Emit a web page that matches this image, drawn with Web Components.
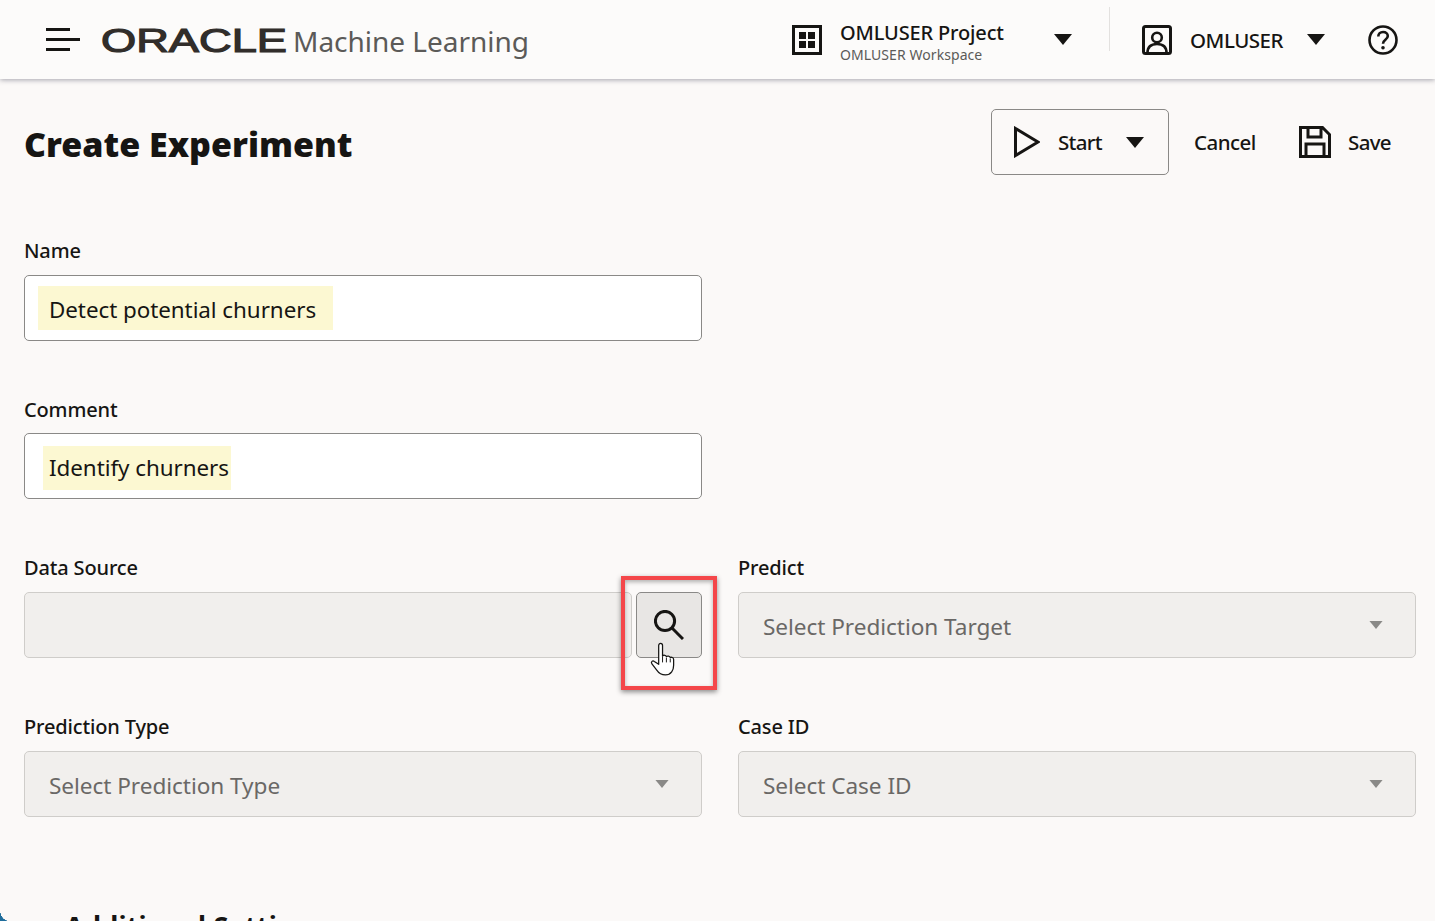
<!DOCTYPE html>
<html lang="en">
<head>
<meta charset="utf-8">
<title>Create Experiment</title>
<style>
  html, body { margin: 0; height: 921px; overflow: hidden; background: #fbf9f8; }
  body { font-family: "Noto Sans", "Open Sans", sans-serif; color: #161513; }
</style>
</head>
<body>
<oml-header></oml-header>
<oml-page>
  <oml-title-bar slot="top"></oml-title-bar>
  <oml-field label="Name"><oml-input value="Detect potential churners" mark-left="11" mark-right="17" text-line="47"></oml-input></oml-field>
  <div></div>
  <oml-field label="Comment" style="--label-nudge:1px"><oml-input value="Identify churners" mark-left="6" mark-right="2" mark-drop="4" text-line="44"></oml-input></oml-field>
  <div></div>
  <oml-field label="Data Source"><oml-source-picker></oml-source-picker></oml-field>
  <oml-field label="Predict"><oml-select placeholder="Select Prediction Target"></oml-select></oml-field>
  <oml-field label="Prediction Type"><oml-select placeholder="Select Prediction Type"></oml-select></oml-field>
  <oml-field label="Case ID"><oml-select placeholder="Select Case ID"></oml-select></oml-field>
</oml-page>
<script>
// caret used in header and buttons
const caret = (w, h, color) => `<svg width="${w}" height="${h}" viewBox="0 0 18 11" style="display:block;flex:none"><path d="M0 0h18L9 11z" fill="${color}"/></svg>`;

class OmlHeader extends HTMLElement {
  constructor() {
    super();
    this.attachShadow({ mode: "open" });
    this.shadowRoot.innerHTML = `
    <style>
      :host { display: flex; align-items: center; height: 79px; background: #fcfbfa; box-shadow: 0 1px 5px rgba(60,60,80,.45); position: relative; z-index: 2; padding-left: 46px; box-sizing: border-box; }
      svg { display: block; flex: none; }
      .logo { margin-left: 21px; margin-top: 3px; overflow: visible; }
      .product { margin-left: 5px; font-size: 28px; color: #5b5a58; letter-spacing: -.02px; white-space: nowrap; line-height: 40px; margin-top: 3px; }
      .right { margin-left: auto; display: flex; align-items: center; height: 100%; }
      .project { margin-left: 18px; width: 214px; margin-top: 5px; }
      .project b { display: block; font-weight: 500; font-size: 20px; line-height: 26px; letter-spacing: -.15px; white-space: nowrap; }
      .project span { display: block; font-size: 14px; line-height: 18px; color: #5b5a58; white-space: nowrap; letter-spacing: .07px; }
      .sep { width: 1px; height: 44px; background: #e3e1df; margin: -21px 32px 0 37px; }
      .user { margin-left: 18px; font-size: 20.5px; font-weight: 500; letter-spacing: -.5px; width: 117px; margin-top: 1px; }
    </style>
    <svg width="34" height="24" viewBox="0 0 34 24"><path d="M0 1.5h24M0 11.5h34M0 21.5h24" stroke="#161513" stroke-width="3"/></svg>
    <svg class="logo" width="187" height="32" viewBox="0 0 187 32"><text x="0" y="27" font-family="Liberation Sans" font-size="33.5" fill="#312d2a" stroke="#312d2a" stroke-width="1.2" textLength="186" lengthAdjust="spacingAndGlyphs">ORACLE</text></svg>
    <span class="product">Machine Learning</span>
    <div class="right">
      <svg width="30" height="30" viewBox="0 0 30 30"><path d="M0 0h30v30H0zM3 3v24h24V3zM7 7h7v7H7zM16 7h7v7h-7zM7 16h7v7H7zM16 16h7v7h-7z" fill="#161513" fill-rule="evenodd"/></svg>
      <div class="project"><b>OMLUSER Project</b><span>OMLUSER Workspace</span></div>
      ${caret(18, 11, "#161513")}
      <div class="sep"></div>
      <svg width="30" height="30" viewBox="0 0 30 30"><rect x="1.500" y="1.500" width="27" height="27" rx="2" fill="none" stroke="#161513" stroke-width="3"/><circle cx="15" cy="12.500" r="4.800" fill="none" stroke="#161513" stroke-width="2.600"/><path d="M5.500 28c0-6 3.500-9 9.500-9s9.500 3 9.500 9" fill="none" stroke="#161513" stroke-width="2.600"/></svg>
      <span class="user">OMLUSER</span>
      ${caret(18, 11, "#161513")}
      <svg style="margin:0 37px 0 43px" width="30" height="30" viewBox="0 0 30 30"><circle cx="15" cy="15" r="13.500" fill="none" stroke="#161513" stroke-width="2.600"/><path d="M10.300 11.600c0-2.800 2-4.600 4.800-4.600s4.700 1.700 4.700 4.100c0 3.800-4.800 3.700-4.800 7.600" fill="none" stroke="#161513" stroke-width="2.600"/><circle cx="15" cy="22.800" r="1.800" fill="#161513"/></svg>
    </div>`;
  }
}
customElements.define("oml-header", OmlHeader);

class OmlPage extends HTMLElement {
  constructor() {
    super();
    this.attachShadow({ mode: "open" });
    this.shadowRoot.innerHTML = `
    <style>
      :host { display: block; padding: 30px 19px 0 24px; position: relative; }
      .grid { display: grid; grid-template-columns: 678px 678px; column-gap: 36px; row-gap: 56.67px; margin-top: 63.6px; }
      h2 { margin: 91px 0 0 41px; font-size: 27px; font-weight: 700; line-height: 36px; letter-spacing: .2px; }
      .corner { position: fixed; left: 0; bottom: 0; width: 9px; height: 11px; background: radial-gradient(ellipse 9px 11px at 100% 0, transparent 98%, #1f6d9c 100%); }
    </style>
    <slot name="top"></slot>
    <div class="grid"><slot></slot></div>
    <h2>Additional Settings</h2>
    <div class="corner"></div>`;
  }
}
customElements.define("oml-page", OmlPage);

class OmlTitleBar extends HTMLElement {
  constructor() {
    super();
    this.attachShadow({ mode: "open" });
    this.shadowRoot.innerHTML = `
    <style>
      :host { display: flex; align-items: center; height: 66px; }
      h1 { margin: 0; font-size: 34px; font-weight: 900; line-height: 44px; letter-spacing: 0; white-space: nowrap; margin-top: 3px; }
      .actions { margin-left: auto; display: flex; align-items: center; font-size: 20.5px; font-weight: 500; letter-spacing: -.4px; }
      .start { display: flex; align-items: center; box-sizing: border-box; width: 178px; height: 66px; border: 1px solid #8a8987; border-radius: 5px; padding-left: 22px; }
      .start svg:first-child { margin-right: 18px; }
      .start span { width: 68px; letter-spacing: -.7px; }
      .cancel { margin-left: 25px; width: 105px; letter-spacing: -.55px; }
      .save { margin-right: 25px; display: flex; align-items: center; gap: 17px; letter-spacing: -.65px; }
    </style>
    <h1>Create Experiment</h1>
    <div class="actions">
      <div class="start">
        <svg width="26" height="32" viewBox="0 0 26 32"><path d="M1.500 2.500v27L24 16z" fill="none" stroke="#161513" stroke-width="3"/></svg>
        <span>Start</span>
        ${caret(18, 11, "#161513")}
      </div>
      <span class="cancel">Cancel</span>
      <span class="save">
        <svg style="display:block" width="32" height="32" viewBox="0 0 32 32"><path d="M1.500 1.500h22l7 7v22h-29zM9 2v9h13V2M7 30V18h18v12" fill="none" stroke="#161513" stroke-width="3"/></svg>
        Save
      </span>
    </div>`;
  }
}
customElements.define("oml-title-bar", OmlTitleBar);

class OmlField extends HTMLElement {
  constructor() {
    super();
    this.attachShadow({ mode: "open" });
    this.shadowRoot.innerHTML = `
    <style>
      :host { display: block; }
      label { display: block; font-size: 20px; font-weight: 500; line-height: 24px; padding-top: var(--label-nudge, 0); margin-bottom: calc(12px - var(--label-nudge, 0px)); letter-spacing: -.15px; }
    </style>
    <label>${this.getAttribute("label")}</label>
    <slot></slot>`;
  }
}
customElements.define("oml-field", OmlField);

class OmlInput extends HTMLElement {
  constructor() {
    super();
    this.attachShadow({ mode: "open" });
    const left = Number(this.getAttribute("mark-left"));
    const right = Number(this.getAttribute("mark-right"));
    const drop = Number(this.getAttribute("mark-drop") || 0);
    const line = this.getAttribute("text-line");
    this.shadowRoot.innerHTML = `
    <style>
      :host { display: flex; align-items: center; box-sizing: border-box; height: 66px; background: #fff; border: 1px solid #8a8987; border-radius: 5px; }
      span { margin: ${drop}px 0 0 ${24 - left}px; padding: 0 ${right}px 0 ${left}px; height: 44px; line-height: ${line}px; background: #fcf8d2; font-size: 22.4px; color: #161513; white-space: nowrap; letter-spacing: -.05px; }
    </style>
    <span>${this.getAttribute("value")}</span>`;
  }
}
customElements.define("oml-input", OmlInput);

class OmlSelect extends HTMLElement {
  constructor() {
    super();
    this.attachShadow({ mode: "open" });
    this.shadowRoot.innerHTML = `
    <style>
      :host { display: flex; align-items: center; justify-content: space-between; box-sizing: border-box; height: 66px; background: #f1efed; border: 1px solid #cfcdca; border-radius: 5px; padding: 0 32px 0 24px; }
      span { font-size: 22.6px; color: #6a6866; line-height: 30px; white-space: nowrap; margin-top: 4px; letter-spacing: -.05px; }
    </style>
    <span>${this.getAttribute("placeholder")}</span>
    <div>${caret(14, 8, "#8a8987")}</div>`;
  }
}
customElements.define("oml-select", OmlSelect);

class OmlSourcePicker extends HTMLElement {
  constructor() {
    super();
    this.attachShadow({ mode: "open" });
    this.shadowRoot.innerHTML = `
    <style>
      :host { display: flex; gap: 4px; height: 66px; }
      .box { flex: 1; background: #f1efed; border: 1px solid #cfcdca; border-radius: 5px; }
      .btn-wrap { position: relative; width: 66px; }
      button { display: flex; align-items: center; justify-content: center; box-sizing: border-box; width: 66px; height: 66px; padding: 0; background: #e8e6e4; border: 1px solid #8a8987; border-radius: 5px; }
      .callout { position: absolute; left: -15px; top: -16px; width: 96px; height: 114px; box-sizing: border-box; border: 4px solid #f4474a; box-shadow: 0 2px 5px rgba(0,0,0,.45), inset 0 2px 4px rgba(0,0,0,.3); }
      .hand { position: absolute; left: 14px; top: 50px; }
    </style>
    <div class="box"></div>
    <div class="btn-wrap">
      <button aria-label="Search">
        <svg width="30" height="30" viewBox="0 0 30 30"><circle cx="11" cy="11" r="9.600" fill="none" stroke="#161513" stroke-width="3"/><path d="M18 18L29 29" stroke="#161513" stroke-width="3"/></svg>
      </button>
      <div class="callout"></div>
      <svg class="hand" width="27" height="35" viewBox="0 0 28 36"><path d="M9 3.500c0-3 4-3 4 0v11c1-1.500 3.500-1 4 .5 1-1 3.500-.8 4 1 1.300-.8 3.500 0 3.500 2v6c0 5-2.500 10-8.500 10-5 0-7-2-9-5l-5-6.500c-1.500-2 .8-4 2.500-2.500L9 23z" fill="#fff" stroke="#161513" stroke-width="1.300" stroke-linejoin="round"/><path d="M13 15v6M17 16v5M21 17v4" stroke="#161513"/></svg>
    </div>`;
  }
}
customElements.define("oml-source-picker", OmlSourcePicker);
</script>
</body>
</html>
